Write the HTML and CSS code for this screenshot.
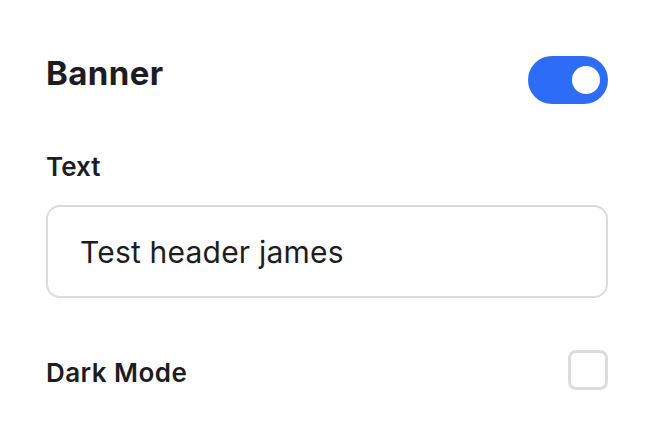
FILE: index.html
```html
<!DOCTYPE html>
<html lang="en">
<head>
  <meta charset="UTF-8" />
  <meta name="viewport" content="width=device-width, initial-scale=1.0"/>
  <title>Banner settings</title>
  <link rel="stylesheet" href="styles.css">
</head>
<body>

  <!-- Banner settings panel -->
  <div class="panel">
    <div class="panel-head">
      <h2>Banner</h2>
      <button class="toggle is-on" type="button" aria-pressed="true">
        <span class="knob"></span>
      </button>
    </div>

    <label class="field-label" for="bannerText">Text</label>
    <input class="text-input" type="text" id="bannerText" value="Test header james" />

    <div class="option-row">
      <label class="option-label" for="darkMode">Dark Mode</label>
      <input class="check" type="checkbox" id="darkMode" />
    </div>
  </div>

</body>
</html>
```

FILE: styles.css
```css
* {
  box-sizing: border-box;
  margin: 0;
  padding: 0;
}

body, html {
  height: 100%;
  background: #fff;
  font-family: "Inter", "Noto Sans", sans-serif;
  color: #1d1d1f;
}

.panel {
  padding: 53px 64px 0 46px;
}

.panel-head {
  display: flex;
  justify-content: space-between;
  align-items: flex-start;
}

.panel-head h2 {
  font-size: 33px;
  line-height: 40px;
  font-weight: 700;
  letter-spacing: 0.4px;
}

.toggle {
  margin-top: 3px;
  width: 80px;
  height: 48px;
  border: none;
  border-radius: 24px;
  background-color: #d9d9d9;
  padding: 10px 8px;
  display: flex;
  justify-content: flex-start;
  cursor: pointer;
}

.toggle.is-on {
  background-color: #2c6cf6;
  justify-content: flex-end;
}

.knob {
  width: 28px;
  height: 28px;
  border-radius: 50%;
  background-color: #fff;
}

.field-label {
  display: block;
  margin-top: 47px;
  font-size: 26px;
  line-height: 32px;
  font-weight: 600;
}

.text-input {
  display: block;
  margin-top: 22px;
  width: 100%;
  height: 93px;
  padding: 0 32px;
  border: 2px solid #dcdcdc;
  border-radius: 14px;
  font-family: inherit;
  font-size: 30px;
  letter-spacing: 0.2px;
  color: #1d1d1f;
  background: #fff;
  outline: none;
}

.option-row {
  margin-top: 52px;
  display: flex;
  justify-content: space-between;
  align-items: flex-start;
}

.option-label {
  margin-top: 7px;
  font-size: 26px;
  line-height: 32px;
  font-weight: 600;
  letter-spacing: 0.45px;
}

.check {
  appearance: none;
  -webkit-appearance: none;
  width: 40px;
  height: 40px;
  border: 3px solid #dcdcdc;
  border-radius: 8px;
  background: #fff;
  cursor: pointer;
}
```
